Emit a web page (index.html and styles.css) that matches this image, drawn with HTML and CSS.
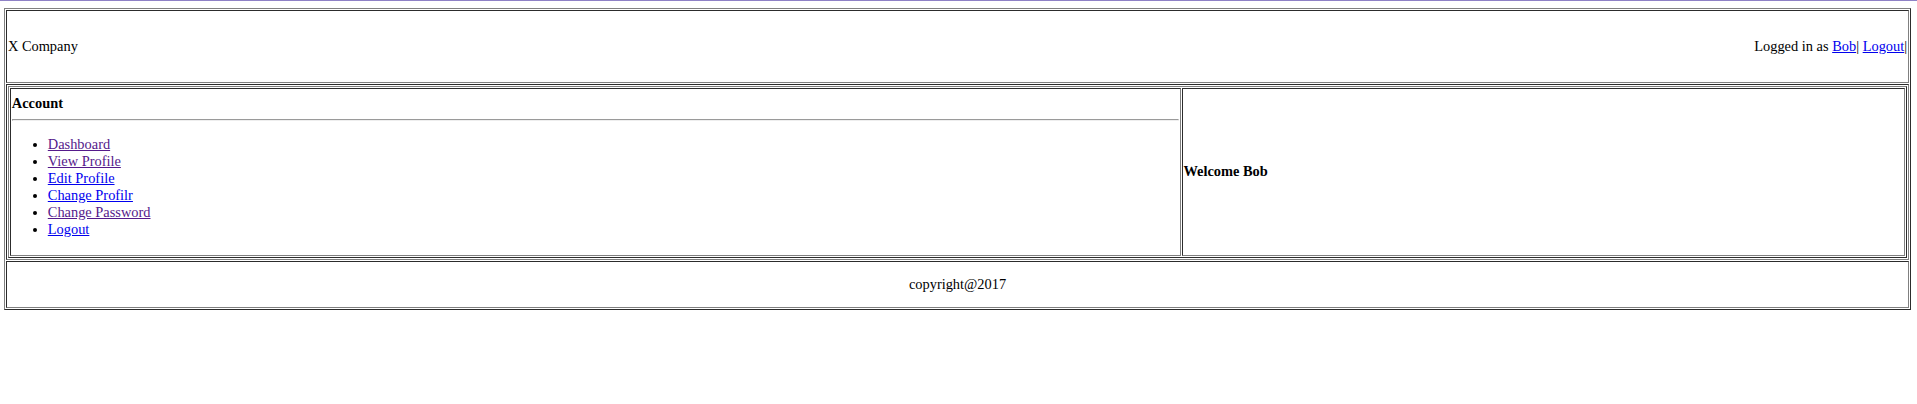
FILE: index.html
```html
<!DOCTYPE html>
<html>
<head>
<meta charset="utf-8">
<title>X Company</title>
<link rel="stylesheet" href="styles.css">
</head>
<body>
<table class="frame page">
  <tr>
    <td class="header-cell">
      <div class="header">
        <span class="brand">X Company</span>
        <span class="user">Logged in as <a href="#">Bob</a>| <a href="#">Logout</a>|</span>
      </div>
    </td>
  </tr>
  <tr>
    <td class="body-cell">
      <table class="frame inner">
        <tr>
          <td class="side">
            <b>Account</b>
            <hr class="rule">
            <ul class="menu">
              <li><a class="visited" href="#">Dashboard</a></li>
              <li><a class="visited" href="#">View Profile</a></li>
              <li><a href="#">Edit Profile</a></li>
              <li><a href="#">Change Profilr</a></li>
              <li><a class="visited" href="#">Change Password</a></li>
              <li><a href="#">Logout</a></li>
            </ul>
          </td>
          <td class="main"><b>Welcome Bob</b></td>
        </tr>
      </table>
    </td>
  </tr>
  <tr>
    <td class="footer-cell">copyright@2017</td>
  </tr>
</table>
</body>
</html>
```

FILE: styles.css
```css
html {
  border-top: 1px solid #8f82c6;
}
body {
  margin: 7px 6px 8px 4px;
  font-family: "Liberation Serif", "Times New Roman", serif;
  font-size: 14.4px;
  color: #000;
  background: #fff;
}
a { color: #0000ee; }
a.visited { color: #551a8b; }

.frame {
  width: 100%;
  border: 1px outset gray;
  border-spacing: 1.8px;
}
.frame > tbody > tr > td {
  border: 1px inset gray;
  padding: 0.9px;
}
.header-cell { height: 69px; }
.header {
  display: flex;
  justify-content: space-between;
  align-items: center;
}
.frame > tbody > tr > td.side {
  width: 61.8%;
  vertical-align: top;
  padding-top: 6.5px;
}
.rule {
  margin: 7.2px 0;
}
.menu {
  margin: 14.4px 0 16px;
  padding-left: 36px;
}
.main { vertical-align: middle; }
.footer-cell {
  height: 44px;
  text-align: center;
}
```
